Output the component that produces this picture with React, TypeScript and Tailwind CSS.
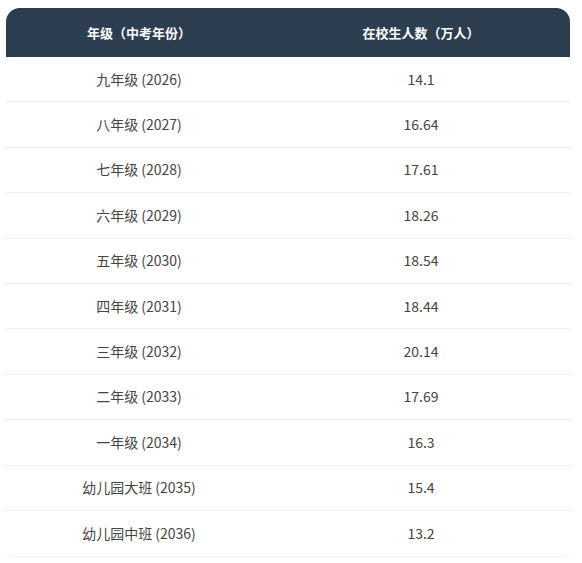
import React from "react";

const rows: [string, string][] = [
  ["九年级 (2026)", "14.1"],
  ["八年级 (2027)", "16.64"],
  ["七年级 (2028)", "17.61"],
  ["六年级 (2029)", "18.26"],
  ["五年级 (2030)", "18.54"],
  ["四年级 (2031)", "18.44"],
  ["三年级 (2032)", "20.14"],
  ["二年级 (2033)", "17.69"],
  ["一年级 (2034)", "16.3"],
  ["幼儿园大班 (2035)", "15.4"],
  ["幼儿园中班 (2036)", "13.2"],
];

export default function App() {
  return (
    <div
      className="w-[582px] h-[563px] bg-white pt-[8px] px-[6px]"
      style={{ fontFamily: '"Noto Sans CJK SC", "Noto Sans", sans-serif' }}
    >
      <div className="w-[564px] rounded-t-[14px] rounded-b-[8px] overflow-hidden bg-white shadow-[0_3px_3px_-1px_rgba(0,0,0,0.04)]">
        <div className="grid grid-cols-[266px_1fr] h-[49px] bg-[#2c3e50] text-white text-[13px] font-bold">
          <div className="flex items-center justify-center">年级（中考年份）</div>
          <div className="flex items-center justify-center">在校生人数（万人）</div>
        </div>
        {rows.map(([a, b], i) => (
          <div
            key={i}
            className={
              i < rows.length - 1
                ? "grid grid-cols-[266px_1fr] h-[45.4px] border-b border-[#ececec] text-[14px] text-[#444444]"
                : "grid grid-cols-[266px_1fr] h-[45.4px] text-[14px] text-[#444444]"
            }
          >
            <div className="flex items-center justify-center">{a}</div>
            <div className="flex items-center justify-center">{b}</div>
          </div>
        ))}
      </div>
    </div>
  );
}
